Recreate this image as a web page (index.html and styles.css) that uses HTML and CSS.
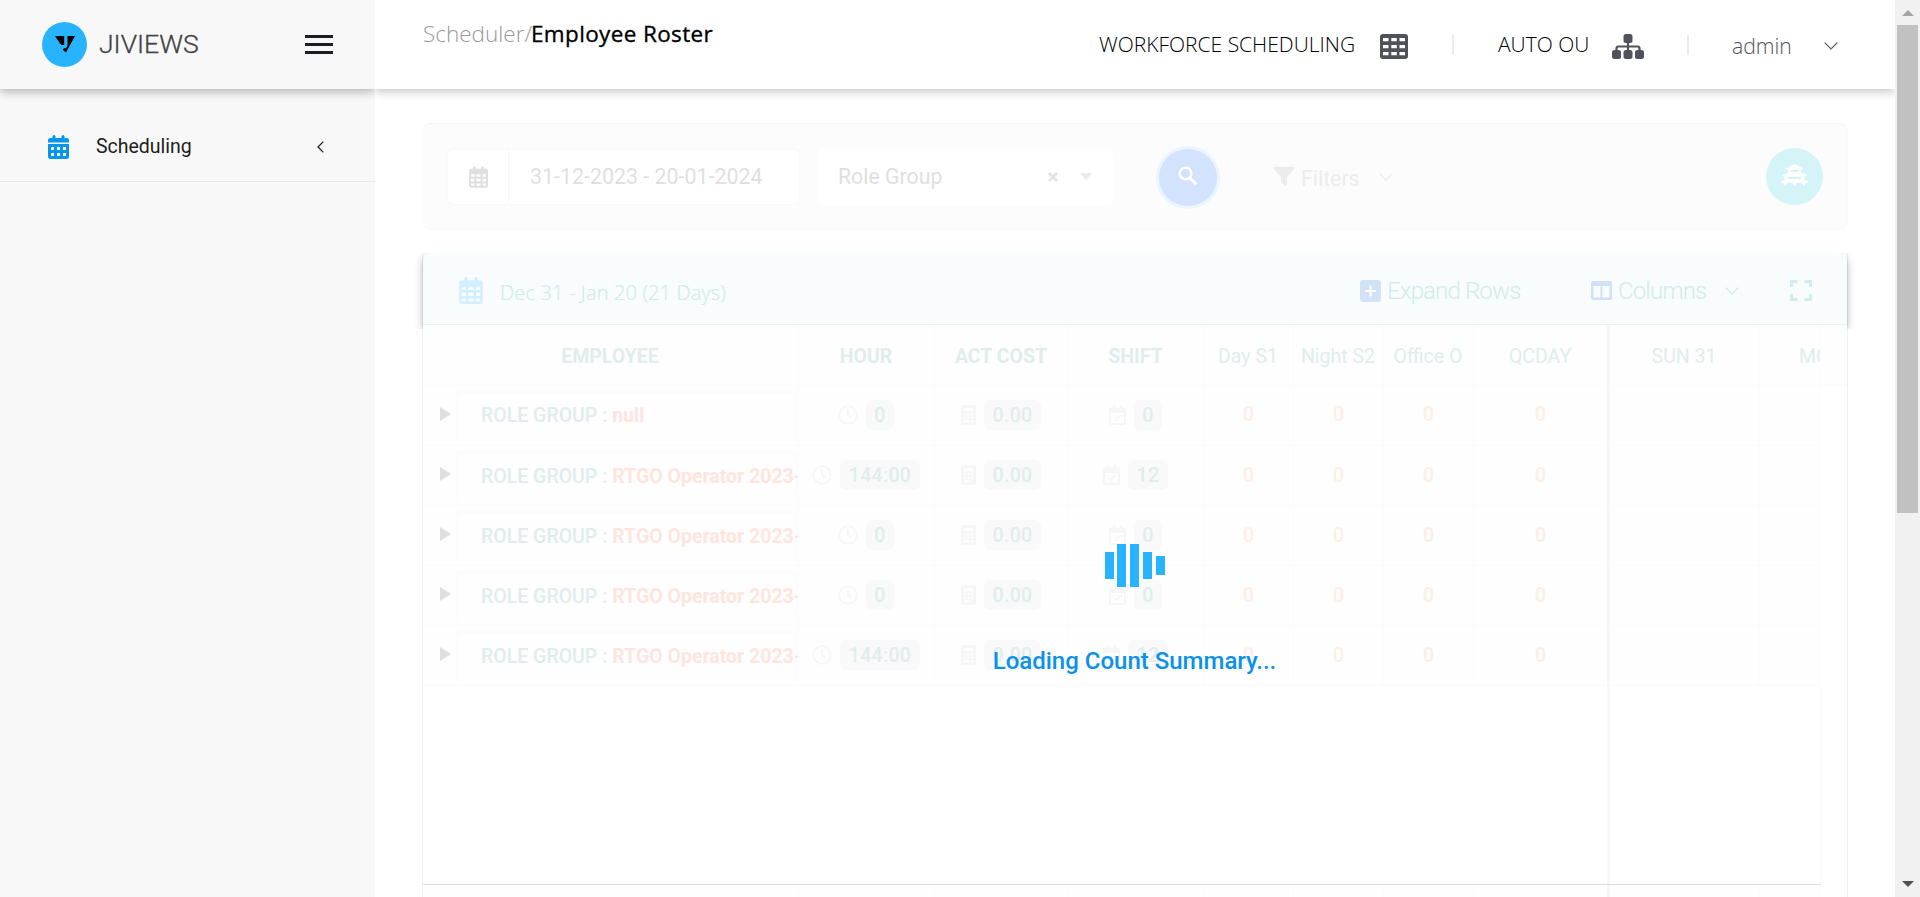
FILE: index.html
```html
<!DOCTYPE html>
<html lang="en">
<head>
<meta charset="utf-8">
<title>Employee Roster</title>
<link rel="stylesheet" href="styles.css">
</head>
<body>
<svg class="defs" aria-hidden="true">
  <symbol id="cal" viewBox="0 0 448 512"><path fill-rule="evenodd" d="M128 0a32 32 0 0 1 32 32v32h128V32a32 32 0 0 1 64 0v32h48a48 48 0 0 1 48 48v352a48 48 0 0 1-48 48H48a48 48 0 0 1-48-48V112a48 48 0 0 1 48-48h48V32a32 32 0 0 1 32-32zM48 192v56h80v-56zm128 0v56h96v-56zm144 0v56h80v-56zM48 296v64h80v-64zm128 0v64h96v-64zm144 0v64h80v-64zM48 408v56h80v-56zm128 0v56h96v-56zm144 0v56h80v-56z"/></symbol>
  <symbol id="days" viewBox="0 0 448 512"><path fill-rule="evenodd" d="M128 0a32 32 0 0 1 32 32v32h128V32a32 32 0 0 1 64 0v32h48a48 48 0 0 1 48 48v48H0v-48a48 48 0 0 1 48-48h48V32a32 32 0 0 1 32-32zM0 192h448v272a48 48 0 0 1-48 48H48a48 48 0 0 1-48-48zM64 256v64h64v-64zm128 0v64h64v-64zm128 0v64h64v-64zM64 384v64h64v-64zm128 0v64h64v-64zm128 0v64h64v-64z"/></symbol>
  <symbol id="clock" viewBox="0 0 20 20"><circle cx="10" cy="10" r="8.8" fill="none" stroke="currentColor" stroke-width="1.8"/><path d="M10 4.5V10l3.8 2.4" fill="none" stroke="currentColor" stroke-width="1.8"/></symbol>
  <symbol id="calc" viewBox="0 0 15 20"><path fill-rule="evenodd" d="M1.5 0h12A1.5 1.5 0 0 1 15 1.5v17a1.5 1.5 0 0 1-1.5 1.5h-12A1.5 1.5 0 0 1 0 18.500v-17A1.500 1.500 0 0 1 1.500 0zM3 3v3.200h9V3zM3 8.200v2h2v-2zm3.500 0v2h2v-2zm3.500 0v2h2v-2zM3 11.700v2h2v-2zm3.500 0v2h2v-2zm3.500 0v2h2v-2zM3 15.200v2h5.500v-2zm7 0v2h2v-2z"/></symbol>
  <symbol id="check" viewBox="0 0 17 20"><path fill-rule="evenodd" d="M4 0h2v2.500h5V0h2v2.500h2.500A1.500 1.500 0 0 1 17 4v14.500a1.500 1.500 0 0 1-1.500 1.500h-14A1.500 1.500 0 0 1 0 18.500V4a1.500 1.500 0 0 1 1.500-1.500H4zM2 8v10h13V8z"/><path d="M5 12.500l2.500 2.500 5-5" fill="none" stroke="currentColor" stroke-width="1.700"/></symbol>
  <symbol id="down" viewBox="0 0 14 8"><path d="M.7.7L7 7 13.300.7" fill="none" stroke="currentColor" stroke-width="1.200"/></symbol>
</svg>
<div class="app">
  <aside class="side">
    <div class="brand">
      <svg class="logo" viewBox="0 0 45 45"><circle cx="22.500" cy="22.500" r="22.500" fill="#28b3fe"/><path d="M13 14h9.200v9h-2.500L18 21.500zM25.500 14h7.500l-9 16.500-3.300-2.800 1.200-1.500h2l1.600-2.200z"/></svg>
      <span class="brand-name">JIVIEWS</span>
      <span class="burger"><i></i><i></i><i></i></span>
    </div>
    <div class="nav">
      <svg class="nav-ico"><use href="#days"/></svg>
      <span class="nav-text">Scheduling</span>
      <svg class="nav-arrow" viewBox="0 0 7 12"><path d="M6.300.6L1 6l5.300 5.400" fill="none" stroke="#222" stroke-width="1.300"/></svg>
    </div>
  </aside>
  <main class="main">
    <header class="top">
      <div class="crumb"><span class="crumb-a">Scheduler/</span><span class="crumb-b">Employee Roster</span></div>
      <span class="top-wf">WORKFORCE SCHEDULING</span>
      <svg class="top-grid" viewBox="0 0 28 25"><path fill-rule="evenodd" d="M3 0h22a3 3 0 0 1 3 3v19a3 3 0 0 1-3 3H3a3 3 0 0 1-3-3V3a3 3 0 0 1 3-3zM3 4v3.300h5.500V4zm8.300 0v3.300h5.500V4zm8.200 0v3.300H25V4zM3 11v3.300h5.500V11zm8.300 0v3.300h5.500V11zm8.200 0v3.300H25V11zM3 18v3.300h5.500V18zm8.300 0v3.300h5.500V18zm8.200 0v3.300H25V18z"/></svg>
      <i class="sep"></i>
      <span class="top-ou">AUTO OU</span>
      <svg class="top-tree" viewBox="0 0 32 25"><rect x="11.500" width="9" height="9" rx="2.500"/><rect y="16" width="9" height="9" rx="2.500"/><rect x="11.500" y="16" width="9" height="9" rx="2.500"/><rect x="23" y="16" width="9" height="9" rx="2.500"/><path d="M16 8v9M4.500 17v-2.500a2 2 0 0 1 2-2h19a2 2 0 0 1 2 2V17" fill="none" stroke="#4f5259" stroke-width="2.200"/></svg>
      <i class="sep sep-2"></i>
      <span class="top-user">admin</span>
      <svg class="top-down"><use href="#down"/></svg>
    </header>
    <section class="filters">
      <div class="date"><span class="date-ico"><svg><use href="#cal"/></svg></span><span class="date-text">31-12-2023 - 20-01-2024</span></div>
      <div class="select"><span class="select-text">Role Group</span><svg class="select-x" viewBox="0 0 10 10"><path d="M1 1l8 8M9 1L1 9" stroke="#e2e2e2" stroke-width="2.500"/></svg><i class="caret"></i></div>
      <div class="search"><svg viewBox="0 0 20 20"><circle cx="7.500" cy="7.500" r="5.900" fill="none" stroke="#fff" stroke-width="2.400"/><path d="M11.800 11.800l6.600 6.600" stroke="#fff" stroke-width="3"/></svg></div>
      <svg class="funnel" viewBox="0 0 22 19"><path d="M1 0h20q1.500 0 .6 1.500L14 10v8.200q-.3 1-1.500.5L8.500 16q-.5-.4-.5-1v-5L.4 1.500Q-.5 0 1 0z"/></svg>
      <span class="filters-text">Filters</span>
      <svg class="filters-down"><use href="#down"/></svg>
      <div class="pagoda"><svg viewBox="0 0 27 22"><path fill-rule="evenodd" d="M13.500 0l8 4v1.800h-1.800V9l6 1.500v2h-2.200V16L27 17v2h-2.200l-1 2.500h-1.600L21 19h-5.600l-1 2.500h-1.800L11.600 19H6l-1.200 2.500H3.200l-1-2.500H0v-2l3.500-1v-3.500H1.300v-2l6-1.500V5.800H5.500V4zM9.500 6v2h8V6zM7 13v2h13v-2z"/></svg></div>
    </section>
    <section class="board">
      <div class="board-head">
        <svg class="bh-cal"><use href="#cal"/></svg>
        <span class="bh-title">Dec 31 - Jan 20 (21 Days)</span>
        <svg class="bh-plus" viewBox="0 0 21 22"><rect width="21" height="22" rx="3" fill="#d2e2f6"/><path d="M5 11h11M10.500 5.500v11" stroke="#fff" stroke-width="2"/></svg>
        <span class="bh-expand">Expand Rows</span>
        <svg class="bh-cols" viewBox="0 0 21 19"><path fill="#d2e0f6" fill-rule="evenodd" d="M2 0h17a2 2 0 0 1 2 2v15a2 2 0 0 1-2 2H2a2 2 0 0 1-2-2V2a2 2 0 0 1 2-2zM2.500 5v11.500h7V5zm9 0v11.500h7V5z"/></svg>
        <span class="bh-columns">Columns</span>
        <svg class="bh-down"><use href="#down"/></svg>
        <svg class="bh-full" viewBox="0 0 22 21"><path d="M1.500 7V1.500H7.500M14.500 1.500h6V7M20.500 14v5.500h-6M7.500 19.500h-6V14" fill="none" stroke="#d0ecec" stroke-width="3"/></svg>
      </div>
      <div class="row head">
        <div class="c strong">EMPLOYEE</div><div class="c strong">HOUR</div><div class="c strong">ACT COST</div><div class="c strong">SHIFT</div><div class="c">Day S1</div><div class="c">Night S2</div><div class="c">Office O</div><div class="c bar">QCDAY</div><div class="c">SUN 31</div><div class="c mon">MON 1</div><div class="c end"></div>
      </div>
      <div class="row row-first">
        <div class="c emp"><i class="tri"></i><div class="group">ROLE GROUP : <b>null</b></div></div><div class="c"><svg class="ck"><use href="#clock"/></svg><span class="pill">0</span></div><div class="c"><svg class="ca"><use href="#calc"/></svg><span class="pill">0.00</span></div><div class="c"><svg class="ch"><use href="#check"/></svg><span class="pill">0</span></div><div class="c n">0</div><div class="c n">0</div><div class="c n">0</div><div class="c n bar">0</div><div class="c"></div><div class="c"></div><div class="c end"></div>
      </div>
      <div class="row">
        <div class="c emp"><i class="tri"></i><div class="group">ROLE GROUP : <b>RTGO Operator 2023-</b></div></div><div class="c"><svg class="ck"><use href="#clock"/></svg><span class="pill">144:00</span></div><div class="c"><svg class="ca"><use href="#calc"/></svg><span class="pill">0.00</span></div><div class="c"><svg class="ch"><use href="#check"/></svg><span class="pill">12</span></div><div class="c n">0</div><div class="c n">0</div><div class="c n">0</div><div class="c n bar">0</div><div class="c"></div><div class="c"></div><div class="c end"></div>
      </div>
      <div class="row">
        <div class="c emp"><i class="tri"></i><div class="group">ROLE GROUP : <b>RTGO Operator 2023-</b></div></div><div class="c"><svg class="ck"><use href="#clock"/></svg><span class="pill">0</span></div><div class="c"><svg class="ca"><use href="#calc"/></svg><span class="pill">0.00</span></div><div class="c"><svg class="ch"><use href="#check"/></svg><span class="pill">0</span></div><div class="c n">0</div><div class="c n">0</div><div class="c n">0</div><div class="c n bar">0</div><div class="c"></div><div class="c"></div><div class="c end"></div>
      </div>
      <div class="row">
        <div class="c emp"><i class="tri"></i><div class="group">ROLE GROUP : <b>RTGO Operator 2023-</b></div></div><div class="c"><svg class="ck"><use href="#clock"/></svg><span class="pill">0</span></div><div class="c"><svg class="ca"><use href="#calc"/></svg><span class="pill">0.00</span></div><div class="c"><svg class="ch"><use href="#check"/></svg><span class="pill">0</span></div><div class="c n">0</div><div class="c n">0</div><div class="c n">0</div><div class="c n bar">0</div><div class="c"></div><div class="c"></div><div class="c end"></div>
      </div>
      <div class="row">
        <div class="c emp"><i class="tri"></i><div class="group">ROLE GROUP : <b>RTGO Operator 2023-</b></div></div><div class="c"><svg class="ck"><use href="#clock"/></svg><span class="pill">144:00</span></div><div class="c"><svg class="ca"><use href="#calc"/></svg><span class="pill">0.00</span></div><div class="c"><svg class="ch"><use href="#check"/></svg><span class="pill">12</span></div><div class="c n">0</div><div class="c n">0</div><div class="c n">0</div><div class="c n bar">0</div><div class="c"></div><div class="c"></div><div class="c end"></div>
      </div>
      <div class="blank"><div class="blank-a"></div><div class="blank-b"></div></div>
      <div class="row foot">
        <div class="c"></div><div class="c"></div><div class="c"></div><div class="c"></div><div class="c"></div><div class="c"></div><div class="c"></div><div class="c bar"></div><div class="c"></div><div class="c"></div><div class="c end"></div>
      </div>
    </section>
    <div class="loader">
      <div class="wave"><i class="w2"></i><i class="w3"></i><i class="w3"></i><i class="w2"></i><i class="w1"></i></div>
      <div class="loader-text">Loading Count Summary...</div>
    </div>
  </main>
  <div class="scroll"><i class="up"></i><i class="thumb"></i><i class="dn"></i></div>
</div>
</body>
</html>
```
FILE: styles.css
```css
* { box-sizing: border-box; }
body { margin: 0; font-family: Roboto, "Liberation Sans", sans-serif; background: #fff; overflow: hidden; }
svg { display: block; flex: none; fill: currentColor; }
.defs { position: absolute; width: 0; height: 0; }
.app { display: flex; width: 1920px; height: 897px; overflow: hidden; white-space: nowrap; }

/* sidebar */
.side { width: 375px; flex: none; background: #f8f8f8; }
.brand { height: 89px; display: flex; align-items: center; padding-left: 42px; box-shadow: 0 3px 9px rgba(0,0,0,.27); clip-path: inset(0 0 -20px 0); }
.logo { width: 45px; height: 45px; color: #000; }
.brand-name { width: 206px; margin-left: 12px; padding-bottom: 2px; font-size: 26.500px; font-weight: 300; color: #3f4145; -webkit-text-stroke: .3px; }
.burger { width: 28px; display: flex; flex-direction: column; gap: 5px; }
.burger i { height: 3px; background: #1d1e22; }
.nav { height: 93px; display: flex; align-items: center; padding: 23px 0 0 48px; border-bottom: 1px solid #e9e9e9; }
.nav-ico { width: 21px; height: 24px; color: #0797ea; }
.nav-text { width: 221px; margin-left: 27px; font-size: 19.500px; color: #1d1e22; }
.nav-arrow { width: 7px; height: 12px; }

/* top bar */
.main { position: relative; width: 1520px; flex: none; height: 897px; overflow: hidden; }
.top { height: 89px; display: flex; align-items: flex-start; padding-left: 48px; font-family: "Open Sans", "Noto Sans", sans-serif; box-shadow: 0 3px 9px rgba(0,0,0,.22); }
.crumb { width: 676px; padding-top: 17px; display: flex; font-size: 22.500px; line-height: 33px; }
.crumb-a { width: 108px; font-weight: 300; color: #999; }
.crumb-b { font-weight: 500; color: #000; letter-spacing: .36px; -webkit-text-stroke: .35px; }
.top-wf, .top-ou { margin-top: 30px; font-size: 21px; line-height: 29px; font-weight: 300; color: #000; }
.top-wf { width: 281px; }
.top-grid { width: 28px; height: 25px; margin-top: 34px; color: #4f5259; }
.sep { width: 2px; height: 20px; margin: 35px 44px 0; background: #ebebeb; }
.top-ou { width: 114px; }
.top-tree { width: 32px; height: 25px; margin-top: 34px; color: #4f5259; }
.sep-2 { margin-left: 43px; margin-right: 43px; }
.top-user { width: 92px; margin-top: 31px; font-size: 21.200px; line-height: 29px; font-weight: 300; color: #4f5259; }
.top-down { width: 14px; height: 8px; margin-top: 42px; color: #55585e; }

/* filter strip */
.filters { width: 1426px; height: 107px; margin: 34px 0 0 47px; padding-left: 25px; display: flex; align-items: center; background: #fcfcfc; border: 1px solid #f9f9f9; border-top-color: #f2f2f2; border-radius: 9px; color: #dfdfdf; font-size: 21px; }
.date { width: 353px; height: 56px; margin-left: -1px; display: flex; align-items: center; background: #fff; border: 1px solid #f9f9f9; border-radius: 6px; }
.date-ico { width: 61px; height: 54px; padding: 16px 0 0 21px; border-right: 1px solid #f7f7f7; }
.date-ico svg { width: 19px; height: 22px; }
.date-text { margin-left: 21px; font-size: 21.400px; }
.select { width: 297px; height: 56px; margin-left: 17px; padding-left: 21px; display: flex; align-items: center; background: #fff; border-radius: 6px; }
.select-text { width: 210px; font-size: 21.300px; }
.select-x { width: 10px; height: 10px; }
.caret { margin-left: 22px; border: 6px solid transparent; border-top: 7px solid #ebebeb; border-bottom: 0; }
.search { width: 58px; height: 57px; margin: 1px 0 0 45px; border-radius: 50%; background: #d3e2fd; box-shadow: 0 0 0 3px #eaf5fe; padding: 17px 0 0 19px; }
.search svg { width: 20px; height: 20px; }
.funnel { width: 22px; height: 19px; margin-left: 56px; color: #ececec; }
.filters-text { width: 78px; margin-left: 6px; font-size: 21.300px; color: #ececec; padding-top: 3px; }
.filters-down { width: 14px; height: 8px; color: #e9e9e9; }
.pagoda { width: 57px; height: 57px; margin-left: 373px; border-radius: 50%; background: #d4f4f7; color: #fff; padding: 16px 0 0 15px; }
.pagoda svg { width: 27px; height: 22px; }

/* roster board */
.board { width: 1426px; height: 650px; margin: 23px 0 0 47px; border: solid #f1f1f1; border-width: 0 1px; }
.board-head { height: 72px; display: flex; align-items: center; padding: 4px 0 0 36px; background: #f8fcfd; border-bottom: 1px solid #e9f1f1; border-radius: 7px 7px 0 0; color: #d0ebeb; box-shadow: 0 4px 8px rgba(0,0,0,.3); clip-path: inset(0 -14px -4px -14px); font-size: 24px; font-weight: 300; }
.bh-cal { width: 24px; height: 27px; color: #d3eefe; }
.bh-title { width: 860px; margin-left: 17px; padding-top: 4px; font: 300 20px/28px "Open Sans", "Noto Sans", sans-serif; letter-spacing: .15px; -webkit-text-stroke: .2px; }
.bh-plus { width: 21px; height: 22px; }
.bh-expand { width: 203px; margin-left: 6px; letter-spacing: -.85px; }
.bh-cols { width: 21px; height: 19px; margin-left: 1px; }
.bh-columns { width: 107px; margin-left: 6px; letter-spacing: -.85px; }
.bh-down { width: 14px; height: 8px; color: #d2e5f4; }
.bh-full { width: 22px; height: 21px; margin-left: 51px; }

.row { position: relative; display: grid; grid-template-columns: 376px 136px 134px 135px 90px 90px 90px 136px 150px 61px 26px; height: 60px; background: #fefefe; color: #e0edec; font-size: 19.500px; }
.c { display: flex; align-items: center; justify-content: center; overflow: hidden; padding: 0 1px 2px 0; border: solid #fbfbfb; border-width: 0 1px 1px 0; }
.c.bar { border-right: 3px solid #f7f7f7; }
.head { height: 61px; }
.head .c { padding-top: 2px; padding-bottom: 0; }
.strong { font-weight: 700; }
.c.mon { justify-content: flex-start; padding-left: 39px; }
.c.end { border-right: 0; border-bottom: 0; background: #fff; }
.head .c.end { border-bottom: 1px solid #fafafa; background: #fefefe; }
.c.n { color: #ffeee4; font-weight: 500; font-size: 20px; padding-right: 0; }
.row-first .c.n { padding-bottom: 4px; }
.c.emp { justify-content: flex-start; padding: 0 0 0 17px; }
.tri { flex: none; border: 7px solid transparent; border-left: 11px solid #dedede; border-right: 0; margin-top: -3px; }
.group { width: 342px; flex: none; height: 50px; margin-left: 5px; padding: 0 0 2px 22px; border: 3px solid #fcfcfc; border-bottom: 0; display: flex; align-items: center; white-space: pre; font-weight: 500; }
.group b { font-weight: 700; color: #ffe5de; }
.row-first .group { padding-bottom: 4px; }
.pill { height: 30px; margin-left: 8px; padding: 0 8.500px; border-radius: 6px; background: #f9f9f9; font-size: 19.500px; font-weight: 500; line-height: 31px; letter-spacing: .3px; }
.ck, .ca, .ch { color: #f6f6f6; height: 20px; }
.ck { width: 20px; }
.ca { width: 15px; }
.ch { width: 17px; }
.blank { height: 199px; display: flex; border-bottom: 1px solid #ddd; width: 1398px; }
.blank-a { width: 1187px; border-right: 3px solid #f8f8f8; }
.blank-b { width: 211px; border-right: 1px solid #fafafa; }
.foot { height: 14px; }

/* loading layer over the board */
.loader { position: absolute; left: 0; top: 544px; width: 1519px; display: flex; flex-direction: column; align-items: center; }
.wave { height: 43px; display: flex; align-items: center; gap: 4px; }
.wave i { width: 9px; background: #28b3fe; }
.wave .w1 { height: 19px; }
.wave .w2 { height: 27px; }
.wave .w3 { height: 43px; }
.wave .w2:first-child { margin-right: -1px; }
.loader-text { margin-top: 59px; font-size: 24px; line-height: 30px; font-weight: 500; color: #0a91ea; }

/* window scrollbar */
.scroll { width: 25px; background: #f1f1f1; display: flex; flex-direction: column; align-items: center; }
.up { margin-top: 10px; border: 6px solid transparent; border-top: 0; border-bottom: 6px solid #a3a3a3; }
.thumb { width: 21px; height: 488px; margin-top: 9px; background: #c1c1c1; }
.dn { margin-top: 368px; border: 6px solid transparent; border-bottom: 0; border-top: 6px solid #505050; }
```
